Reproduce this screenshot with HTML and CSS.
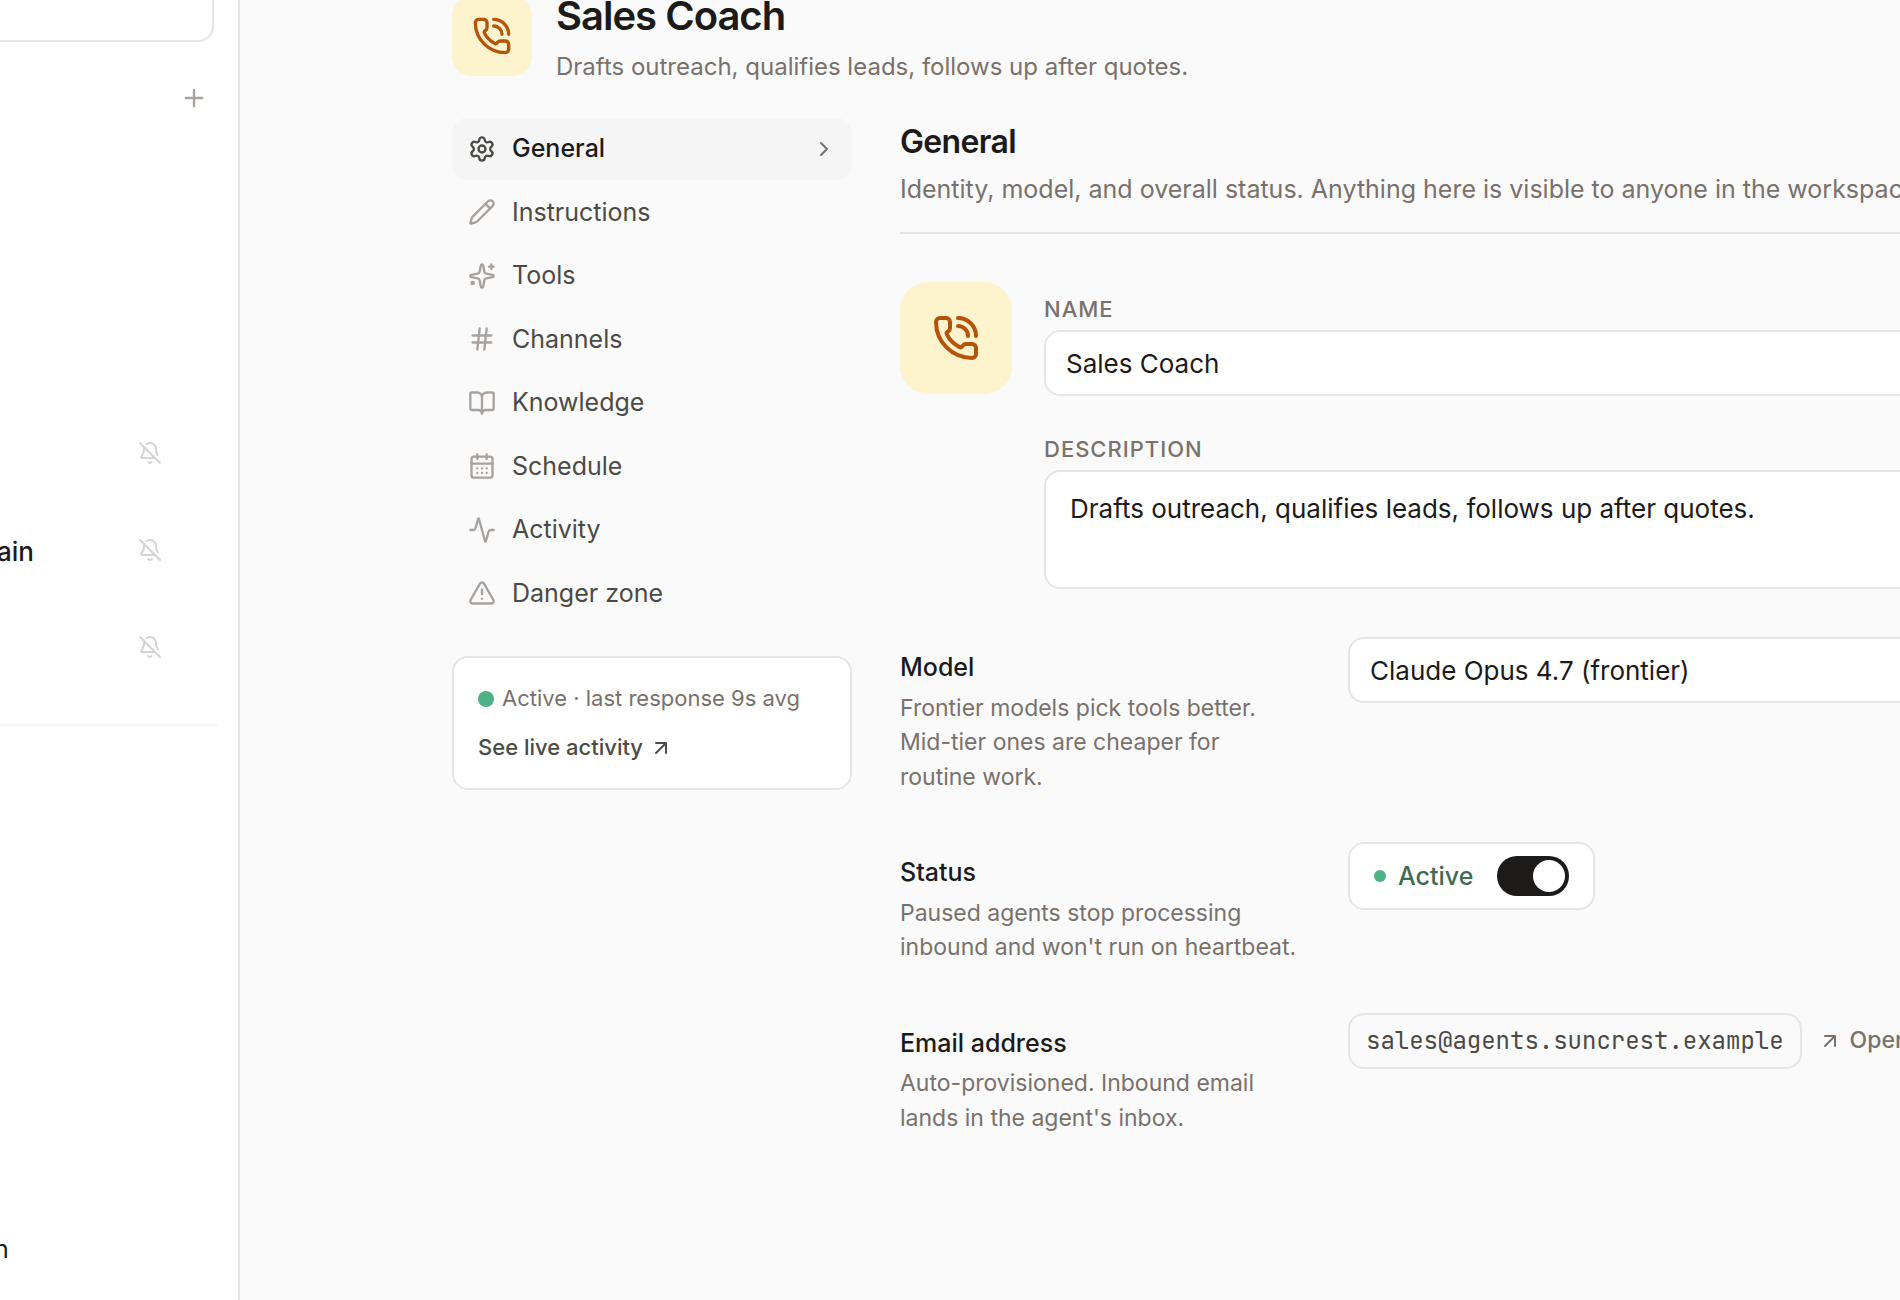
FILE: index.html
```html
<!DOCTYPE html>
<html lang="en">
<head>
    <meta charset="UTF-8">
    <title>Sales Coach</title>
    <link rel="stylesheet" href="styles.css">
</head>
<body>
    <svg class="sprite" aria-hidden="true">
        <symbol id="phone" viewBox="0 0 24 24">
            <path d="M13 2a9 9 0 0 1 9 9M13 6a5 5 0 0 1 5 5"/>
            <path d="M13.832 16.568a1 1 0 0 0 1.213-.303l.355-.465A2 2 0 0 1 17 15h3a2 2 0 0 1 2 2v3a2 2 0 0 1-2 2A18 18 0 0 1 2 4a2 2 0 0 1 2-2h3a2 2 0 0 1 2 2v3a2 2 0 0 1-.8 1.6l-.468.351a1 1 0 0 0-.292 1.233 14 14 0 0 0 6.392 6.384"/>
        </symbol>
        <symbol id="bell-off" viewBox="0 0 24 24">
            <path d="M10.268 21a2 2 0 0 0 3.464 0"/>
            <path d="M17 17H4a1 1 0 0 1-.74-1.673C4.59 13.956 6 12.499 6 8a6 6 0 0 1 .258-1.742"/>
            <path d="m2 2 20 20"/>
            <path d="M8.668 3.01A6 6 0 0 1 18 8c0 2.687.77 4.653 1.707 6.05"/>
        </symbol>
        <symbol id="arrow-up-right" viewBox="0 0 24 24">
            <path d="M7 7h10v10M7 17 17 7"/>
        </symbol>
    </svg>

    <div class="app">
        <aside class="sidebar">
            <div class="side-card"></div>
            <div class="side-head">
                <button class="icon-btn" type="button" aria-label="Add">
                    <svg class="icon" viewBox="0 0 24 24"><path d="M5 12h14M12 5v14"/></svg>
                </button>
            </div>
            <ul class="side-list">
                <li><svg class="icon icon-sm"><use href="#bell-off"/></svg></li>
                <li><span class="side-name">ain</span><svg class="icon icon-sm"><use href="#bell-off"/></svg></li>
                <li><svg class="icon icon-sm"><use href="#bell-off"/></svg></li>
            </ul>
            <div class="side-user">n</div>
        </aside>

        <main class="main">
            <header class="agent-head">
                <div class="avatar"><svg class="icon"><use href="#phone"/></svg></div>
                <div>
                    <h1>Sales Coach</h1>
                    <p class="lead">Drafts outreach, qualifies leads, follows up after quotes.</p>
                </div>
            </header>

            <div class="columns">
                <div class="left">
                    <nav class="nav">
                        <a class="nav-item active" href="#general">
                            <svg class="icon" viewBox="0 0 24 24"><path d="M9.671 4.136a2.34 2.34 0 0 1 4.659 0 2.34 2.34 0 0 0 3.319 1.915 2.34 2.34 0 0 1 2.33 4.033 2.34 2.34 0 0 0 0 3.831 2.34 2.34 0 0 1-2.33 4.033 2.34 2.34 0 0 0-3.319 1.915 2.34 2.34 0 0 1-4.659 0 2.34 2.34 0 0 0-3.32-1.915 2.34 2.34 0 0 1-2.33-4.033 2.34 2.34 0 0 0 0-3.831A2.34 2.34 0 0 1 6.35 6.051a2.34 2.34 0 0 0 3.319-1.915"/><circle cx="12" cy="12" r="3"/></svg>
                            <span>General</span>
                            <svg class="icon icon-sm chevron" viewBox="0 0 24 24"><path d="m9 18 6-6-6-6"/></svg>
                        </a>
                        <a class="nav-item" href="#instructions">
                            <svg class="icon" viewBox="0 0 24 24"><path d="M21.174 6.812a1 1 0 0 0-3.986-3.987L3.842 16.174a2 2 0 0 0-.5.83l-1.321 4.352a.5.5 0 0 0 .623.622l4.353-1.32a2 2 0 0 0 .83-.497z"/><path d="m15 5 4 4"/></svg>
                            <span>Instructions</span>
                        </a>
                        <a class="nav-item" href="#tools">
                            <svg class="icon" viewBox="0 0 24 24"><path d="M11.017 2.814a1 1 0 0 1 1.966 0l1.051 5.558a2 2 0 0 0 1.594 1.594l5.558 1.051a1 1 0 0 1 0 1.966l-5.558 1.051a2 2 0 0 0-1.594 1.594l-1.051 5.558a1 1 0 0 1-1.966 0l-1.051-5.558a2 2 0 0 0-1.594-1.594l-5.558-1.051a1 1 0 0 1 0-1.966l5.558-1.051a2 2 0 0 0 1.594-1.594z"/><path d="M20 2v4M22 4h-4"/><circle cx="4" cy="18" r="1"/></svg>
                            <span>Tools</span>
                        </a>
                        <a class="nav-item" href="#channels">
                            <svg class="icon" viewBox="0 0 24 24"><path d="M4 9h16M4 15h16M10 3 8 21M16 3l-2 18"/></svg>
                            <span>Channels</span>
                        </a>
                        <a class="nav-item" href="#knowledge">
                            <svg class="icon" viewBox="0 0 24 24"><path d="M12 7v14"/><path d="M3 18a1 1 0 0 1-1-1V4a1 1 0 0 1 1-1h5a4 4 0 0 1 4 4 4 4 0 0 1 4-4h5a1 1 0 0 1 1 1v13a1 1 0 0 1-1 1h-6a3 3 0 0 0-3 3 3 3 0 0 0-3-3z"/></svg>
                            <span>Knowledge</span>
                        </a>
                        <a class="nav-item" href="#schedule">
                            <svg class="icon" viewBox="0 0 24 24"><rect x="3" y="4" width="18" height="18" rx="2"/><path d="M8 2v4M16 2v4M3 10h18M8 14h.01M12 14h.01M16 14h.01M8 18h.01M12 18h.01M16 18h.01"/></svg>
                            <span>Schedule</span>
                        </a>
                        <a class="nav-item" href="#activity">
                            <svg class="icon" viewBox="0 0 24 24"><path d="M22 12h-2.48a2 2 0 0 0-1.93 1.46l-2.35 8.36a.25.25 0 0 1-.48 0L9.24 2.18a.25.25 0 0 0-.48 0l-2.35 8.36A2 2 0 0 1 4.49 12H2"/></svg>
                            <span>Activity</span>
                        </a>
                        <a class="nav-item" href="#danger">
                            <svg class="icon" viewBox="0 0 24 24"><path d="m21.73 18-8-14a2 2 0 0 0-3.48 0l-8 14A2 2 0 0 0 4 21h16a2 2 0 0 0 1.73-3M12 9v4M12 17h.01"/></svg>
                            <span>Danger zone</span>
                        </a>
                    </nav>

                    <div class="live-card">
                        <div class="live-status"><span class="dot dot-lg"></span>Active · last response 9s avg</div>
                        <a class="live-link" href="#activity">See live activity <svg class="icon icon-sm"><use href="#arrow-up-right"/></svg></a>
                    </div>
                </div>

                <section class="panel" id="general">
                    <div class="panel-head">
                        <h2>General</h2>
                        <p class="lead">Identity, model, and overall status. Anything here is visible to anyone in the workspace.</p>
                    </div>

                    <div class="identity">
                        <div class="avatar avatar-lg"><svg class="icon"><use href="#phone"/></svg></div>
                        <div class="fields">
                            <div class="form-group">
                                <label for="name">Name</label>
                                <input type="text" id="name" class="control" value="Sales Coach">
                            </div>
                            <div class="form-group">
                                <label for="description">Description</label>
                                <textarea id="description" class="control">Drafts outreach, qualifies leads, follows up after quotes.</textarea>
                            </div>
                        </div>
                    </div>

                    <div class="rows">
                        <div class="row">
                            <div class="row-text">
                                <label class="row-title" for="model">Model</label>
                                <p>Frontier models pick tools better. Mid-tier ones are cheaper for routine work.</p>
                            </div>
                            <select id="model" class="control">
                                <option>Claude Opus 4.7 (frontier)</option>
                            </select>
                        </div>
                        <div class="row">
                            <div class="row-text">
                                <label class="row-title" for="status">Status</label>
                                <p>Paused agents stop processing inbound and won't run on heartbeat.</p>
                            </div>
                            <div class="status-box">
                                <span class="dot"></span>
                                <span class="status-text">Active</span>
                                <input type="checkbox" id="status" class="toggle" checked>
                            </div>
                        </div>
                        <div class="row">
                            <div class="row-text">
                                <h3 class="row-title">Email address</h3>
                                <p>Auto-provisioned. Inbound email lands in the agent's inbox.</p>
                            </div>
                            <div class="email">
                                <code>sales@agents.suncrest.example</code>
                                <a href="#inbox"><svg class="icon icon-sm"><use href="#arrow-up-right"/></svg>Open inbox</a>
                            </div>
                        </div>
                    </div>
                </section>
            </div>
        </main>
    </div>
</body>
</html>
```
FILE: styles.css
```css
* {
    box-sizing: border-box;
}
body {
    margin: 0;
    font-family: Inter, "Liberation Sans", sans-serif;
    font-size: 25px;
    line-height: 1.5;
    color: #1c1b19;
    background: #fafafa;
    overflow: hidden;
}
h1, h2, h3, p, ul {
    margin: 0;
    padding: 0;
}
a {
    color: inherit;
    text-decoration: none;
}
.sprite {
    display: none;
}
.icon {
    width: 28px;
    height: 28px;
    flex: none;
    fill: none;
    stroke: currentColor;
    stroke-width: 2;
    stroke-linecap: round;
    stroke-linejoin: round;
}
.icon-sm {
    width: 24px;
    height: 24px;
}
.app {
    display: flex;
    height: 100vh;
}

/* sidebar */
.sidebar {
    width: 240px;
    flex: none;
    display: flex;
    flex-direction: column;
    background: #fff;
    border-right: 2px solid #e5e5e5;
}
.side-card {
    height: 42px;
    margin-right: 24px;
    border: 2px solid #e5e5e5;
    border-width: 0 2px 2px 0;
    border-bottom-right-radius: 16px;
}
.side-head {
    display: flex;
    justify-content: flex-end;
    padding: 42px 30px 0 0;
}
.icon-btn {
    display: flex;
    padding: 0;
    border: none;
    background: none;
    color: #a8a29e;
    cursor: pointer;
}
.side-list {
    list-style: none;
    margin: 292px 20px 0 0;
    padding-bottom: 29px;
    border-bottom: 2px solid #f5f5f5;
}
.side-list li {
    display: flex;
    align-items: center;
    justify-content: flex-end;
    height: 97px;
    padding-right: 56px;
    color: #d4d4d4;
}
.side-name {
    margin-left: -3px;
    margin-right: auto;
    padding-top: 4px;
    font-size: 26px;
    font-weight: 500;
    color: #1c1b19;
}
.side-user {
    margin-top: auto;
    margin-left: -6px;
    padding-bottom: 32px;
}

/* agent header */
.main {
    flex: 1;
    min-width: 0;
    padding-left: 212px;
}
.agent-head {
    display: flex;
    gap: 24px;
    margin-top: -4px;
}
.avatar {
    width: 80px;
    height: 80px;
    flex: none;
    display: flex;
    align-items: center;
    justify-content: center;
    border-radius: 20px;
    background: #fdf3cd;
    color: #b45309;
}
.avatar .icon {
    width: 40px;
    height: 40px;
}
.avatar-lg {
    width: 112px;
    height: 112px;
    border-radius: 28px;
}
.avatar-lg .icon {
    width: 48px;
    height: 48px;
}
h1 {
    font-size: 40px;
    font-weight: 600;
    line-height: 48px;
    letter-spacing: -0.025em;
    margin-top: -4px;
    margin-bottom: 8px;
}
.lead {
    color: #78716c;
    line-height: 38px;
    white-space: nowrap;
}
.agent-head .lead {
    font-size: 24px;
}

/* left column */
.columns {
    display: flex;
    gap: 48px;
    margin-top: 32px;
}
.left {
    width: 400px;
    flex: none;
}
.nav {
    display: flex;
    flex-direction: column;
    gap: 2px;
}
.nav-item {
    display: flex;
    align-items: center;
    gap: 16px;
    padding: 12px 16px;
    border-radius: 16px;
    color: #4c4a46;
}
.nav-item .icon {
    color: #a8a29e;
}
.nav-item.active {
    background: #f5f5f5;
    color: #1c1b19;
    font-weight: 500;
}
.nav-item.active .icon {
    color: #4c4a46;
}
.nav-item.active .chevron {
    margin-left: auto;
    color: #78716c;
}
.live-card {
    display: flex;
    flex-direction: column;
    gap: 16px;
    margin-top: 32px;
    padding: 24px;
    border: 2px solid #e5e5e5;
    border-radius: 16px;
    background: #fff;
    font-size: 22px;
}
.live-status {
    display: flex;
    align-items: center;
    gap: 8px;
    color: #78716c;
}
.live-link {
    display: flex;
    align-items: center;
    gap: 6px;
    color: #4c4a46;
    font-weight: 500;
}
.dot {
    width: 12px;
    height: 12px;
    flex: none;
    border-radius: 50%;
    background: #4fb286;
}
.dot-lg {
    width: 16px;
    height: 16px;
}

/* settings panel, runs on past the right edge */
.panel {
    flex: 1;
    min-width: 0;
    margin-right: -200px;
}
.panel-head {
    padding-bottom: 24px;
    border-bottom: 2px solid #e5e5e5;
}
h2 {
    font-size: 32px;
    font-weight: 600;
    line-height: 48px;
    letter-spacing: -0.02em;
    margin-bottom: 4px;
}
.identity {
    display: flex;
    gap: 32px;
    margin-top: 48px;
}
.fields {
    flex: 1;
    display: flex;
    flex-direction: column;
    gap: 36px;
    padding-top: 10px;
}
.form-group {
    display: flex;
    flex-direction: column;
    gap: 4px;
}
.form-group label {
    font-size: 22px;
    font-weight: 500;
    line-height: 34px;
    text-transform: uppercase;
    letter-spacing: 1px;
    color: #78716c;
}
.control {
    width: 100%;
    height: 66px;
    margin: 0;
    padding: 0 20px;
    border: 2px solid #e5e5e5;
    border-radius: 16px;
    background: #fff;
    color: #1c1b19;
    font-family: inherit;
    font-size: 26px;
    appearance: none;
}
textarea.control {
    height: 119px;
    padding: 17px 24px;
    line-height: 1.5;
    resize: none;
}
.rows {
    display: flex;
    flex-direction: column;
    gap: 48px;
    margin-top: 48px;
}
.row {
    display: grid;
    grid-template-columns: 400px 1fr;
    gap: 48px;
    align-items: start;
}
.row-text {
    padding-top: 12px;
}
.row-title {
    display: block;
    margin-bottom: 4px;
    font-size: 25px;
    font-weight: 500;
}
.row-text p {
    font-size: 23px;
    color: #78716c;
}
.status-box {
    display: flex;
    align-items: center;
    gap: 12px;
    justify-self: start;
    padding: 12px 24px;
    border: 2px solid #e5e5e5;
    border-radius: 16px;
    background: #fff;
}
.status-text {
    color: #3f6b54;
    font-weight: 500;
    line-height: 40px;
}
.toggle {
    appearance: none;
    width: 72px;
    height: 40px;
    margin: 0 0 0 12px;
    padding: 4px;
    border-radius: 20px;
    background: #a8a29e;
    display: flex;
    cursor: pointer;
}
.toggle::before {
    content: "";
    width: 32px;
    height: 32px;
    border-radius: 50%;
    background: #fff;
}
.toggle:checked {
    justify-content: flex-end;
    background: #1c1b19;
}
.email {
    display: flex;
    align-items: center;
    gap: 16px;
    white-space: nowrap;
}
.email code {
    padding: 8px 16px;
    border: 2px solid #e5e5e5;
    border-radius: 16px;
    color: #4c4a46;
    font-family: "JetBrains Mono", "Liberation Mono", monospace;
    font-size: 24px;
    line-height: 36px;
}
.email a {
    display: flex;
    align-items: center;
    gap: 8px;
    color: #78716c;
    font-size: 23px;
    font-weight: 500;
}
```
